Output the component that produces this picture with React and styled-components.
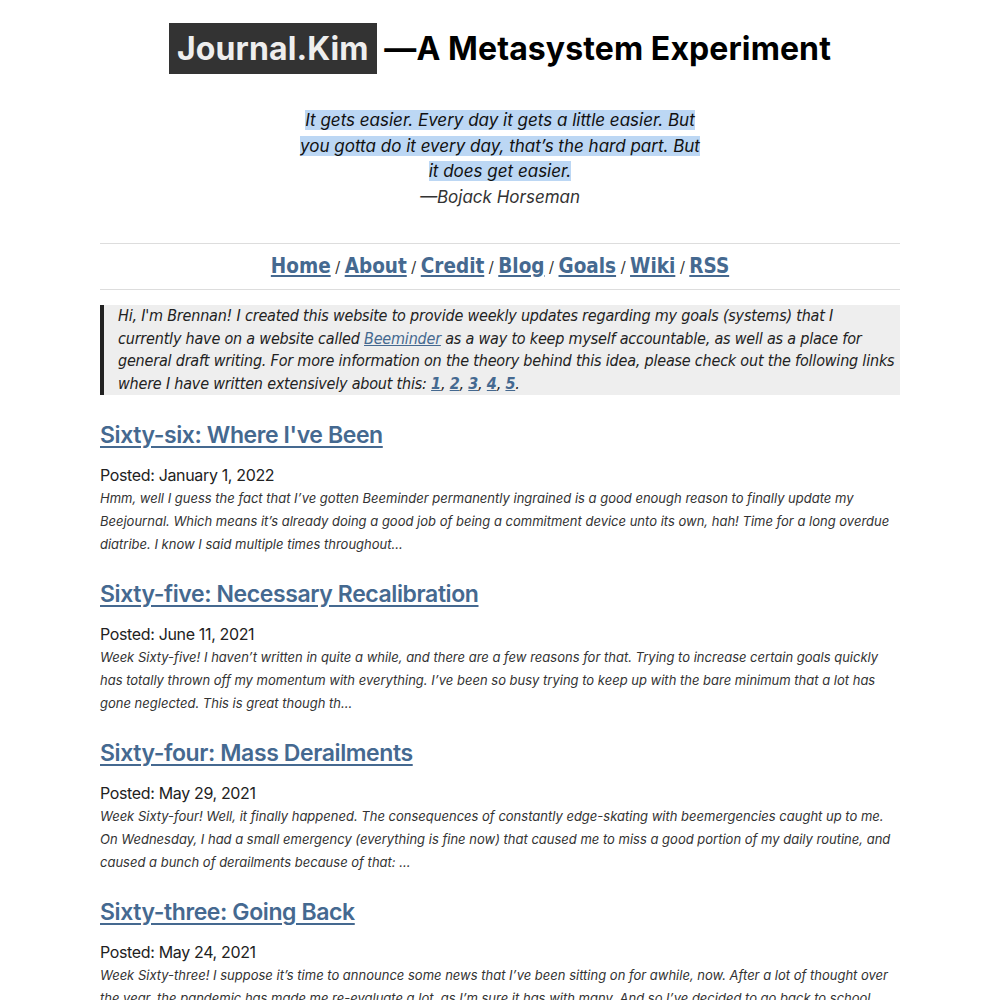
import React from "react";
import { styled, createGlobalStyle } from "styled-components";

const posts = [
  {
    title: "Sixty-six: Where I've Been",
    date: "January 1, 2022",
    excerpt:
      "Hmm, well I guess the fact that I’ve gotten Beeminder permanently ingrained is a good enough reason to finally update my Beejournal. Which means it’s already doing a good job of being a commitment device unto its own, hah! Time for a long overdue diatribe. I know I said multiple times throughout...",
  },
  {
    title: "Sixty-five: Necessary Recalibration",
    date: "June 11, 2021",
    excerpt:
      "Week Sixty-five! I haven’t written in quite a while, and there are a few reasons for that. Trying to increase certain goals quickly has totally thrown off my momentum with everything. I’ve been so busy trying to keep up with the bare minimum that a lot has gone neglected. This is great though th...",
  },
  {
    title: "Sixty-four: Mass Derailments",
    date: "May 29, 2021",
    excerpt:
      "Week Sixty-four! Well, it finally happened. The consequences of constantly edge-skating with beemergencies caught up to me. On Wednesday, I had a small emergency (everything is fine now) that caused me to miss a good portion of my daily routine, and caused a bunch of derailments because of that: ...",
  },
  {
    title: "Sixty-three: Going Back",
    date: "May 24, 2021",
    excerpt:
      "Week Sixty-three! I suppose it’s time to announce some news that I’ve been sitting on for awhile, now. After a lot of thought over the year, the pandemic has made me re-evaluate a lot, as I’m sure it has with many. And so I’ve decided to go back to school, and I’ll be starting in the fall...",
  },
];

const navItems = ["Home", "About", "Credit", "Blog", "Goals", "Wiki", "RSS"];

const App = () => {
  return (
    <>
      <GlobalStyle />
      <Page>
        <Title>
          <Brand>Journal.Kim</Brand> —A Metasystem Experiment
        </Title>

        <Quote>
          <Highlight>
            It gets easier. Every day it gets a little easier. But you gotta do
            it every day, that’s the hard part. But it does get easier.
          </Highlight>
          <br />
          <Attribution>—Bojack Horseman</Attribution>
        </Quote>

        <Nav>
          {navItems.map((item, i) => (
            <React.Fragment key={item}>
              {i > 0 && <Slash> / </Slash>}
              <NavLink href="#">{item}</NavLink>
            </React.Fragment>
          ))}
        </Nav>

        <Intro>
          Hi, I'm Brennan! I created this website to provide weekly updates
          regarding my goals (systems) that I currently have on a website called{" "}
          <IntroLink href="#">Beeminder</IntroLink> as a way to keep myself
          accountable, as well as a place for general draft writing. For more
          information on the theory behind this idea, please check out the
          following links where I have written extensively about this:{" "}
          <NumLink href="#">1</NumLink>, <NumLink href="#">2</NumLink>,{" "}
          <NumLink href="#">3</NumLink>, <NumLink href="#">4</NumLink>,{" "}
          <NumLink href="#">5</NumLink>.
        </Intro>

        {posts.map((post) => (
          <Post key={post.title}>
            <PostTitle>
              <PostLink href="#">{post.title}</PostLink>
            </PostTitle>
            <Posted>Posted: {post.date}</Posted>
            <Excerpt>{post.excerpt}</Excerpt>
          </Post>
        ))}
      </Page>
    </>
  );
};

export default App;

const GlobalStyle = createGlobalStyle`
  body {
    margin: 0;
    background: #fff;
    color: #222;
    font-family: Inter, "Noto Sans", sans-serif;
  }
`;

const Page = styled.div`
  width: 800px;
  margin: 0 auto;
  padding-top: 30px;
  display: flex;
  flex-direction: column;
`;

const Title = styled.h1`
  margin: 0;
  text-align: center;
  font-size: 32px;
  line-height: 38px;
  font-weight: 700;
  color: #000;
  letter-spacing: 0.1px;
`;

const Brand = styled.span`
  background: #333;
  color: #eee;
  padding: 6px 8px;
`;

const Quote = styled.p`
  width: 400px;
  margin: 40px auto 0;
  text-align: center;
  font-style: italic;
  font-size: 17px;
  line-height: 25.5px;
  color: #111;
`;

const Highlight = styled.span`
  background: #bcd7f4;
`;

const Attribution = styled.span`
  color: #333;
`;

const Nav = styled.nav`
  margin-top: 33px;
  border-top: 1px solid #ddd;
  border-bottom: 1px solid #ddd;
  padding: 9px 0 8px;
  text-align: center;
  font-family: "DejaVu Sans Condensed", "DejaVu Sans", sans-serif;
  line-height: 27px;
`;

const NavLink = styled.a`
  font-size: 20.5px;
  font-weight: 700;
  color: #456990;
  text-decoration: underline;
`;

const Slash = styled.span`
  font-size: 16px;
  color: #333;
`;

const Intro = styled.blockquote`
  margin: 15px 0 0;
  padding: 0 0 0 14px;
  background: #eee;
  border-left: 4px solid #222;
  font-family: "DejaVu Sans Condensed", "DejaVu Sans", sans-serif;
  font-style: italic;
  font-size: 16px;
  letter-spacing: -0.2px;
  line-height: 22.5px;
  color: #222;
`;

const IntroLink = styled.a`
  color: #456990;
  text-decoration: underline;
`;

const NumLink = styled.a`
  color: #456990;
  font-weight: 700;
  text-decoration: underline;
`;

const Post = styled.article`
  margin-top: 26px;
  & + & {
    margin-top: 24px;
  }
`;

const PostTitle = styled.h2`
  margin: 0;
  font-size: 23px;
  line-height: 29px;
  font-weight: 600;
  letter-spacing: -0.4px;
`;

const PostLink = styled.a`
  color: #456990;
  text-decoration: underline;
  text-underline-offset: 3px;
`;

const Posted = styled.div`
  margin-top: 13px;
  font-size: 16px;
  line-height: 24px;
  letter-spacing: -0.35px;
  color: #222;
`;

const Excerpt = styled.p`
  margin: 0;
  font-size: 13px;
  line-height: 23px;
  font-style: italic;
  color: #333;
`;
